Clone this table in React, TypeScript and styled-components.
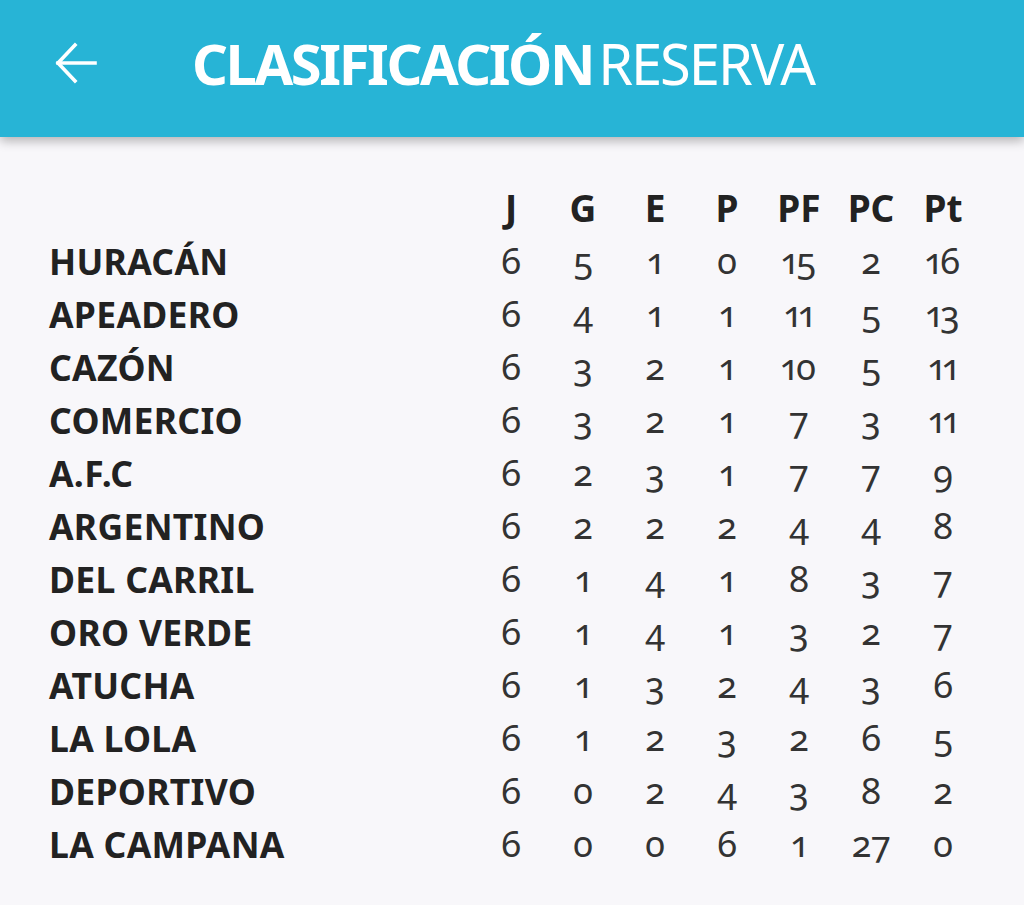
import styled, {createGlobalStyle} from "styled-components";

const GlobalStyle = createGlobalStyle`
  html, body {
    margin: 0;
    padding: 0;
    background: #f8f7fa;
  }
  body {
    font-family: "Noto Sans", "Open Sans", sans-serif;
    color: #232323;
  }
`

const Page = styled.div`
  width: 1024px;
  min-height: 905px;
  background: #f8f7fa;
  overflow: hidden;
`

const TopBar = styled.header`
  height: 137px;
  background: #27b4d6;
  display: flex;
  align-items: center;
  padding-left: 52px;
  box-sizing: border-box;
  box-shadow: 0 4px 10px rgba(0, 0, 0, 0.28);
  position: relative;
  z-index: 1;
`

const BackButton = styled.div`
  width: 48px;
  height: 48px;
  display: flex;
  align-items: center;
  justify-content: center;
  margin-top: -12px;
`

const Title = styled.h1`
  margin: -12px 0 0 92px;
  font-family: "Noto Sans", sans-serif;
  font-size: 56px;
  color: #fff;
  font-weight: 400;
  letter-spacing: -2px;
  white-space: nowrap;
`

const Strong = styled.span`
  font-weight: 700;
  letter-spacing: -2.4px;
  margin-right: 5px;
`

const Table = styled.div`
  display: grid;
  grid-template-columns: 426px repeat(7, 72px);
  grid-auto-rows: 53px;
  padding: 44px 0 0 49px;
`

const HeadCell = styled.div`
  display: flex;
  align-items: center;
  justify-content: center;
  font-size: 37px;
  font-weight: 700;
  color: #222;
`

const TeamCell = styled.div`
  display: flex;
  align-items: center;
  font-size: 35.5px;
  font-weight: 700;
  color: #222;
  letter-spacing: 0.3px;
`

const NumCell = styled.div`
  display: flex;
  align-items: center;
  justify-content: center;
  font-size: 36px;
  font-weight: 400;
  color: #333;
  font-variant-numeric: oldstyle-nums proportional-nums;
  font-feature-settings: "onum" 1, "pnum" 1;
`

const columns = ["J", "G", "E", "P", "PF", "PC", "Pt"];

const rows: [string, number[]][] = [
  ["HURACÁN", [6, 5, 1, 0, 15, 2, 16]],
  ["APEADERO", [6, 4, 1, 1, 11, 5, 13]],
  ["CAZÓN", [6, 3, 2, 1, 10, 5, 11]],
  ["COMERCIO", [6, 3, 2, 1, 7, 3, 11]],
  ["A.F.C", [6, 2, 3, 1, 7, 7, 9]],
  ["ARGENTINO", [6, 2, 2, 2, 4, 4, 8]],
  ["DEL CARRIL", [6, 1, 4, 1, 8, 3, 7]],
  ["ORO VERDE", [6, 1, 4, 1, 3, 2, 7]],
  ["ATUCHA", [6, 1, 3, 2, 4, 3, 6]],
  ["LA LOLA", [6, 1, 2, 3, 2, 6, 5]],
  ["DEPORTIVO", [6, 0, 2, 4, 3, 8, 2]],
  ["LA CAMPANA", [6, 0, 0, 6, 1, 27, 0]],
];

export default function App() {
  return (
    <Page>
      <GlobalStyle/>
      <TopBar>
        <BackButton>
          <svg width="44" height="42" viewBox="0 0 44 42" fill="none" stroke="#fff" strokeWidth="3.6" strokeLinecap="square">
            <path d="M4 21 H41"/>
            <path d="M21 3 L4 21 L21 39"/>
          </svg>
        </BackButton>
        <Title><Strong>CLASIFICACIÓN</Strong>RESERVA</Title>
      </TopBar>

      <Table>
        <div/>
        {columns.map((c) => <HeadCell key={c}>{c}</HeadCell>)}
        {rows.map(([team, values]) => (
          <>
            <TeamCell key={team}>{team}</TeamCell>
            {values.map((v, i) => <NumCell key={team + i}>{v}</NumCell>)}
          </>
        ))}
      </Table>
    </Page>
  )
}
